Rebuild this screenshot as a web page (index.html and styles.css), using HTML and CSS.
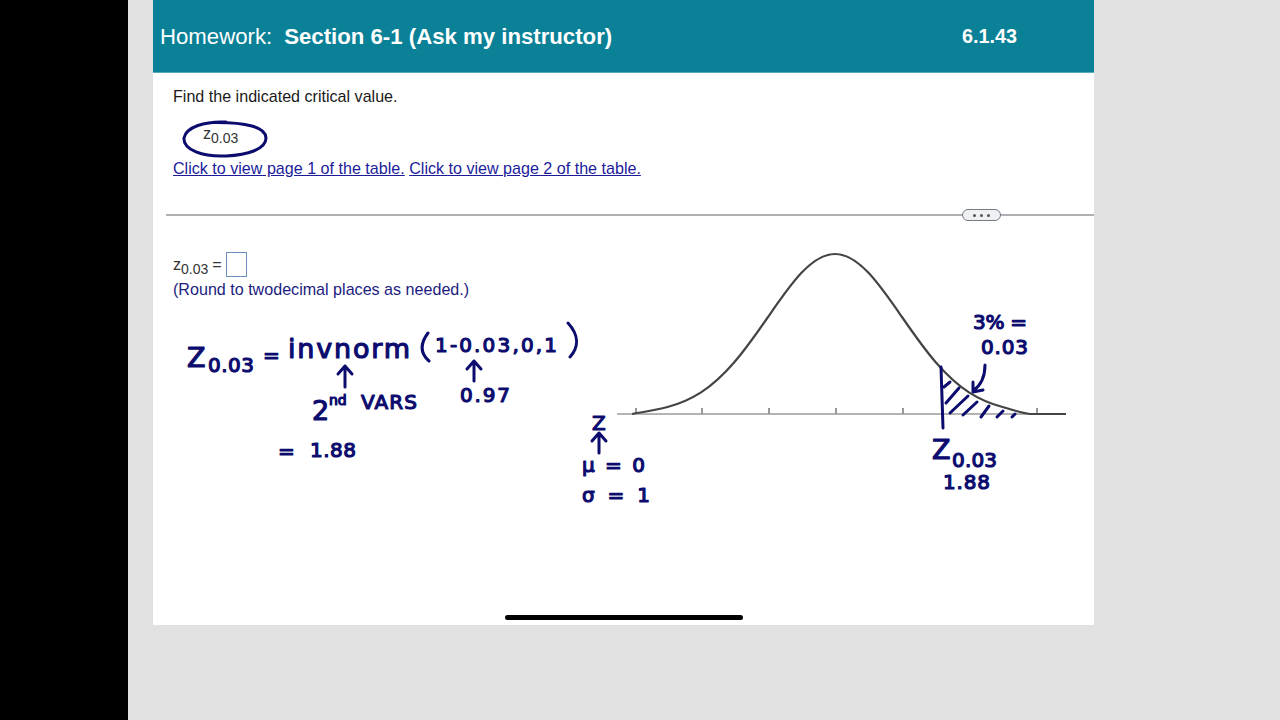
FILE: index.html
```html
<!DOCTYPE html>
<html>
<head>
    <title>Homework: Section 6-1</title>
    <link rel="stylesheet" href="styles.css">
</head>
<body>
    <div class="side-bar"></div>
    <div class="desk">
        <div class="sheet">
            <div class="header">
                <div class="header-title">Homework:<b>Section 6-1 (Ask my instructor)</b></div>
                <div class="header-num">6.1.43</div>
            </div>
            <div class="question">
                <p class="prompt">Find the indicated critical value.</p>
                <p class="symbol">z<sub>0.03</sub></p>
                <p class="links"><a href="#">Click to view page 1 of the table.</a> <a href="#">Click to view page 2 of the table.</a></p>
            </div>
            <div class="rule"><div class="handle"><i></i><i></i><i></i></div></div>
            <div class="answer">
                <div class="answer-row">z<sub>0.03</sub> = <span class="answer-box"></span></div>
                <div class="hint">(Round to twodecimal places as needed.)</div>
            </div>

            <!-- ink drawn on top of the page, same coordinates as the screen -->
            <svg class="ink" viewBox="153 0 941 625" width="941" height="625">
                <g class="graph">
                    <path class="axis" d="M617 414H1066"/>
                    <path class="ticks" d="M636 408V414M702 408V414M769 408V414M836 408V414M903 408V414M1037 408V414"/>
                    <path class="curve" d="M632 414C645.2 411.6 656.3 409.9 667.5 407C678.7 404.1 689.8 399.6 701 392.4C712.2 385.2 723.3 375 734.5 362C745.7 349 756.8 333.2 768 317C779.2 300.8 790.3 284.6 801.5 272.8C812.7 261 823.8 254 835 254C846.2 254 857.3 261 868.5 272.8C879.7 284.6 890.8 300.8 902 317C913.2 333.2 924.3 349 935.5 362C946.7 375 957.8 385.2 969 392.4C980.2 399.6 991.3 404.1 1002.5 407C1013.7 409.9 1020 413 1030 414H1066"/>
                </g>

                <path class="pen" d="M226 122C205 121 186 127 184 138C183 150 203 157 226 156C248 155 266 149 266 138C266 127 246 122 212 122.5"/>
                <path class="pen" d="M428 333C419 345 421 354 429 361M568 323C579 335 579 347 570 357"/>
                <path class="pen" d="M345 387V366M338 374L345 366L352 374M474 381V361M467 369L474 361L481 369"/>
                <path class="pen" d="M599 453V434M592 441L599 433L606 441"/>
                <path class="pen" d="M941 367L943 428"/>
                <path class="pen" d="M985 365C985 377 980 386 973 391M973 382L973 392L983 390"/>
                <path class="pen" d="M944 387L950 382M946 403L959 388M950 413L968 396M963 415L977 402M981 417L989 406M997 417L1003 411M1012 417L1015 414"/>

                <text class="hand hand-lg" x="187" y="367">Z</text>
                <text class="hand" x="208" y="372" textLength="46">0.03</text>
                <text class="hand" x="263" y="362">=</text>
                <text class="hand hand-word" x="288" y="358" textLength="122">invnorm</text>
                <text class="hand" x="435" y="352" textLength="122">1-0.03,0,1</text>
                <text class="hand hand-lg" x="312" y="420">2</text>
                <text class="hand hand-xs" x="329" y="405">nd</text>
                <text class="hand" x="361" y="409" textLength="56">VARS</text>
                <text class="hand" x="460" y="402" textLength="50">0.97</text>
                <text class="hand" x="278" y="458">=</text>
                <text class="hand" x="310" y="457" textLength="46">1.88</text>
                <text class="hand" x="592" y="430">Z</text>
                <text class="hand" x="582" y="472" textLength="63">μ = 0</text>
                <text class="hand" x="582" y="502" textLength="68">σ = 1</text>
                <text class="hand" x="973" y="329" textLength="54">3% =</text>
                <text class="hand" x="981" y="354" textLength="47">0.03</text>
                <text class="hand hand-lg" x="932" y="459">Z</text>
                <text class="hand" x="952" y="467" textLength="45">0.03</text>
                <text class="hand" x="943" y="489" textLength="47">1.88</text>
            </svg>

            <div class="home-bar"></div>
        </div>
    </div>
</body>
</html>
```

FILE: styles.css
```css
body {
    margin: 0;
    height: 720px;
    display: flex;
    overflow: hidden;
    font-family: "Liberation Sans", Arial, sans-serif;
    background-color: #000;
}
.side-bar {
    width: 128px;
    background-color: #000;
}
.desk {
    flex: 1;
    padding-left: 25px;
    background-color: #e1e1e1;
}
.sheet {
    position: relative;
    width: 941px;
    height: 625px;
    background-color: #fff;
}
.header {
    height: 73px;
    display: flex;
    align-items: center;
    justify-content: space-between;
    padding: 1px 77px 0 7px;
    box-sizing: border-box;
    color: #fff;
    background-color: #0b8197;
    border-bottom: 1px solid #5aa9ba;
}
.header-title {
    font-size: 22.2px;
}
.header-title b {
    margin-left: 12px;
}
.header-num {
    font-size: 19.8px;
    font-weight: bold;
}
.question {
    height: 141px;
    padding: 13px 0 0 20px;
    box-sizing: border-box;
    font-size: 16.1px;
    color: #1a1a1a;
}
.question p {
    margin: 0;
}
.prompt {
    line-height: 20px;
}
.symbol {
    margin-top: 15px !important;
    padding-left: 30px;
    line-height: 24px;
    color: #333;
}
sub {
    font-size: 14px;
    line-height: 0;
}
.links {
    line-height: 20px;
    margin-top: 13px !important;
}
.links a {
    color: #1c1c9a;
}
.rule {
    position: relative;
    margin-left: 13px;
    height: 2px;
    background-color: #aeb0b4;
}
.handle {
    position: absolute;
    left: 796px;
    top: -5px;
    width: 37px;
    height: 10px;
    display: flex;
    align-items: center;
    justify-content: center;
    gap: 4px;
    background-color: #eef0f4;
    border: 1px solid #767c84;
    border-radius: 6px;
}
.handle i {
    width: 3px;
    height: 3px;
    border-radius: 50%;
    background-color: #555;
}
.answer {
    padding: 34px 0 0 20px;
    font-size: 16.1px;
}
.answer-row {
    display: flex;
    align-items: center;
    gap: 4px;
    height: 28px;
    color: #333;
}
.answer-row sub {
    align-self: flex-end;
    margin: 0 0 0 -4px;
    line-height: 17px;
}
.answer-box {
    width: 19px;
    height: 23px;
    background-color: #fff;
    border: 1px solid #6b8fbf;
}
.hint {
    line-height: 20px;
    margin-top: 1px;
    color: #1c1c80;
}
.ink {
    position: absolute;
    left: 0;
    top: 0;
}
.axis {
    fill: none;
    stroke: #b4b4b4;
    stroke-width: 2;
}
.ticks {
    fill: none;
    stroke: #999;
    stroke-width: 2;
}
.curve {
    fill: none;
    stroke: #444;
    stroke-width: 2.2;
    stroke-linejoin: round;
}
.pen {
    fill: none;
    stroke: #0c0c6e;
    stroke-width: 3;
    stroke-linecap: round;
    stroke-linejoin: round;
}
.hand {
    font-family: "DejaVu Sans", sans-serif;
    font-size: 20px;
    fill: #0c0c6e;
    stroke: #0c0c6e;
    stroke-width: 1.2;
    stroke-linejoin: round;
}
.hand-lg {
    font-size: 27px;
}
.hand-xs {
    font-size: 14px;
}
.hand-word {
    font-size: 27px;
}
.home-bar {
    position: absolute;
    left: 352px;
    top: 615px;
    width: 238px;
    height: 5px;
    border-radius: 3px;
    background-color: #000;
}
```
